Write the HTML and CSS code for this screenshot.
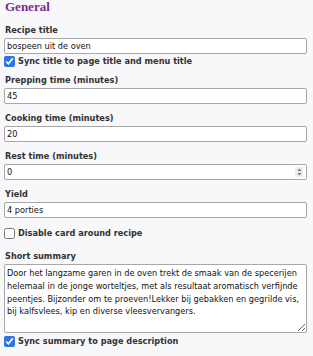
FILE: index.html
```html
<!DOCTYPE html>
<html lang="nl">
<head>
    <meta charset="UTF-8">
    <meta name="viewport" content="width=device-width, initial-scale=1.0">
    <title>Recipe settings</title>
    <link rel="stylesheet" href="styles.css">
</head>
<body>
    <div class="panel">
        <h2>General</h2>

        <div class="field">
            <label for="recipe-title">Recipe title</label>
            <input type="text" id="recipe-title" value="bospeen uit de oven">
        </div>
        <label class="check check-title">
            <input type="checkbox" checked>
            <span>Sync title to page title and menu title</span>
        </label>

        <div class="field">
            <label for="prep-time">Prepping time (minutes)</label>
            <input type="text" id="prep-time" value="45">
        </div>

        <div class="field">
            <label for="cook-time">Cooking time (minutes)</label>
            <input type="text" id="cook-time" value="20">
        </div>

        <div class="field">
            <label for="rest-time">Rest time (minutes)</label>
            <div class="number-box">
                <input type="text" inputmode="numeric" id="rest-time" value="0">
                <span class="spinner">
                    <svg width="5" height="8" viewBox="0 0 5 8">
                        <path d="M2.5 0.5 L4.5 3 L0.5 3 Z" fill="#777"/>
                        <path d="M2.5 7.5 L4.5 5 L0.5 5 Z" fill="#777"/>
                    </svg>
                </span>
            </div>
        </div>

        <div class="field">
            <label for="yield">Yield</label>
            <input type="text" id="yield" value="4 porties">
        </div>

        <label class="check check-card">
            <input type="checkbox">
            <span>Disable card around recipe</span>
        </label>

        <div class="field">
            <label for="summary">Short summary</label>
            <textarea id="summary">Door het langzame garen in de oven trekt de smaak van de specerijen helemaal in de jonge worteltjes, met als resultaat aromatisch verfijnde peentjes. Bijzonder om te proeven!Lekker bij gebakken en gegrilde vis, bij kalfsvlees, kip en diverse vleesvervangers.</textarea>
        </div>
        <label class="check check-summary">
            <input type="checkbox" checked>
            <span>Sync summary to page description</span>
        </label>
    </div>
</body>
</html>
```

FILE: styles.css
```css
body {
    margin: 0;
    background: #f8f7f9;
    font-family: 'DejaVu Sans', Verdana, sans-serif;
    font-size: 8.2px;
    color: #222;
}
.panel {
    padding: 0 6px 0 4px;
}
h2 {
    font-family: 'Liberation Serif', 'Times New Roman', serif;
    font-size: 13px;
    font-weight: bold;
    color: #7b2c8f;
    margin: 0 0 11px 1px;
    line-height: 14px;
}
.field {
    margin-bottom: 9px;
}
.field label {
    display: block;
    font-weight: bold;
    color: #333;
    margin: 0 0 3px 1px;
    line-height: 10px;
}
input[type=text],
textarea,
.number-box {
    display: block;
    box-sizing: border-box;
    width: 100%;
    height: 16px;
    margin: 0;
    padding: 0 2px;
    border: 1px solid #a8a8a8;
    border-radius: 2px;
    background: white;
    font-family: 'DejaVu Sans', Verdana, sans-serif;
    font-size: 8.2px;
    color: #111;
}
.number-box {
    display: flex;
    align-items: center;
    padding-right: 3px;
}
.number-box input[type=text] {
    flex: 1;
    border: none;
    height: 14px;
    padding: 0;
    outline: none;
}
.spinner {
    display: flex;
    align-items: center;
    justify-content: center;
    width: 8px;
    height: 10px;
    background: #ececec;
    border-radius: 1px;
}
textarea {
    height: 69px;
    padding: 2px 2px 0;
    line-height: 12.8px;
    resize: vertical;
    overflow: hidden;
}
.check {
    display: flex;
    align-items: center;
    gap: 3px;
    font-weight: bold;
    color: #333;
    line-height: 11px;
}
.check input {
    margin: 0;
    width: 11px;
    height: 11px;
    accent-color: #2f72e8;
}
/* fields followed by a checkbox row keep their own spacing */
.field:has(+ .check) {
    margin-bottom: 0;
}
.check-title {
    margin: 2px 0 8px;
}
.check-card {
    margin: 10px 0 12px;
}
.check-summary {
    margin: 3px 0 0;
}
```
